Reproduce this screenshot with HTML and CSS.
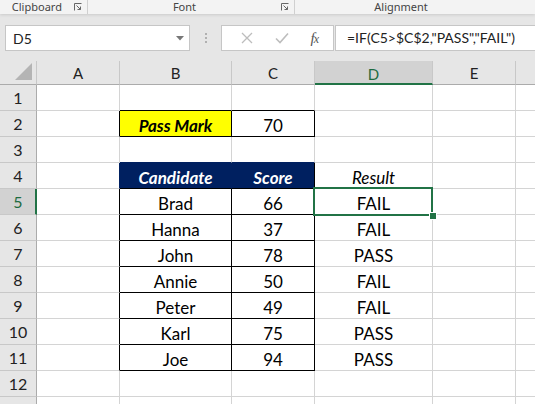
FILE: index.html
```html
<!DOCTYPE html>
<html>
<head>
<meta charset="utf-8">
<link rel="stylesheet" href="styles.css">
</head>
<body>
<div class="ribbon">
  <div class="group g-clip"><span class="glabel">Clipboard</span><svg class="launch" width="8" height="8" viewBox="0 0 8 8"><path d="M0.5 7.5V0.5h7" fill="none" stroke="#666" stroke-width="1"/><path d="M2.5 2.5L6.5 6.5M3.5 6.5h3v-3" fill="none" stroke="#666" stroke-width="1"/></svg></div>
  <div class="group g-font"><span class="glabel">Font</span><svg class="launch" width="8" height="8" viewBox="0 0 8 8"><path d="M0.5 7.5V0.5h7" fill="none" stroke="#666" stroke-width="1"/><path d="M2.5 2.5L6.5 6.5M3.5 6.5h3v-3" fill="none" stroke="#666" stroke-width="1"/></svg></div>
  <div class="group g-align"><span class="glabel">Alignment</span></div>
</div>
<div class="fbar">
  <div class="namebox"><span>D5</span><svg width="8" height="5" viewBox="0 0 8 5"><path d="M0 0h8L4 4.5z" fill="#777"/></svg></div>
  <div class="dots"><i></i><i></i><i></i></div>
  <div class="btns">
    <svg width="12" height="12" viewBox="0 0 12 12"><path d="M1 1L11 11M11 1L1 11" stroke="#bdbdbd" stroke-width="1.3"/></svg>
    <svg width="14" height="12" viewBox="0 0 14 12"><path d="M1 6.5L5 10.5L13 1.5" fill="none" stroke="#bdbdbd" stroke-width="1.6"/></svg>
    <span class="fx"><i>f</i><i class="x">x</i></span>
  </div>
  <div class="formula">=IF(C5&gt;$C$2,"PASS","FAIL")</div>
</div>
<div class="sheet">
  <div class="ch corner"><svg width="18" height="18" viewBox="0 0 18 18"><path d="M17 0V17H0z" fill="#b4b4b4"/></svg></div>
  <div class="ch">A</div><div class="ch">B</div><div class="ch">C</div><div class="ch sel">D</div><div class="ch">E</div><div class="ch last"></div>

  <div class="rh">1</div><div class="c"></div><div class="c bb"></div><div class="c bb"></div><div class="c"></div><div class="c"></div><div class="c last"></div>

  <div class="rh">2</div><div class="c br"></div><div class="c yellow bi br bb">Pass Mark</div><div class="c br bb">70</div><div class="c"></div><div class="c"></div><div class="c last"></div>

  <div class="rh">3</div><div class="c"></div><div class="c bnavy"></div><div class="c bnavy"></div><div class="c"></div><div class="c"></div><div class="c last"></div>

  <div class="rh">4</div><div class="c bnavyr"></div><div class="c navy bi">Candidate</div><div class="c navy bi nr">Score</div><div class="c it">Result</div><div class="c"></div><div class="c last"></div>

  <div class="rh rsel">5</div><div class="c br"></div><div class="c br bb">Brad</div><div class="c br bb">66</div><div class="c active">FAIL<span class="selbox"></span><span class="handle"></span></div><div class="c"></div><div class="c last"></div>

  <div class="rh">6</div><div class="c br"></div><div class="c br bb">Hanna</div><div class="c br bb">37</div><div class="c">FAIL</div><div class="c"></div><div class="c last"></div>

  <div class="rh">7</div><div class="c br"></div><div class="c br bb">John</div><div class="c br bb">78</div><div class="c">PASS</div><div class="c"></div><div class="c last"></div>

  <div class="rh">8</div><div class="c br"></div><div class="c br bb">Annie</div><div class="c br bb">50</div><div class="c">FAIL</div><div class="c"></div><div class="c last"></div>

  <div class="rh">9</div><div class="c br"></div><div class="c br bb">Peter</div><div class="c br bb">49</div><div class="c">FAIL</div><div class="c"></div><div class="c last"></div>

  <div class="rh">10</div><div class="c br"></div><div class="c br bb">Karl</div><div class="c br bb">75</div><div class="c">PASS</div><div class="c"></div><div class="c last"></div>

  <div class="rh">11</div><div class="c br"></div><div class="c br bb">Joe</div><div class="c br bb">94</div><div class="c">PASS</div><div class="c"></div><div class="c last"></div>

  <div class="rh">12</div><div class="c"></div><div class="c"></div><div class="c"></div><div class="c"></div><div class="c"></div><div class="c last"></div>

  <div class="rh"></div><div class="c"></div><div class="c"></div><div class="c"></div><div class="c"></div><div class="c"></div><div class="c last"></div>
</div>
</body>
</html>
```
FILE: styles.css
```css
* { box-sizing: border-box; }
html, body { margin: 0; padding: 0; }
body {
  width: 535px;
  height: 404px;
  overflow: hidden;
  background: #e6e6e6;
  font-family: Lato, "Liberation Sans", sans-serif;
}
.ribbon {
  height: 14px;
  background: #f3f3f3;
  display: flex;
  box-shadow: 0 1px 3px rgba(0,0,0,0.12);
  position: relative;
  font-family: "Noto Sans", "Open Sans", sans-serif;
  font-size: 11px;
  color: #444;
}
.group {
  display: flex;
  align-items: center;
  height: 14px;
  border-right: 1px solid #d0d0d0;
}
.glabel { flex: 1; text-align: center; line-height: 14px; }
.launch { margin-right: 5px; margin-top: -1px; }
.g-clip { width: 96px; }
.g-font { width: 227px; }
.g-align { width: 260px; border-right: none; padding-right: 28px; }

.fbar {
  height: 47px;
  display: flex;
  align-items: flex-start;
  padding-top: 11px;
  padding-left: 5px;
}
.namebox {
  width: 185px;
  height: 26px;
  background: #fff;
  border: 1px solid #c6c6c6;
  display: flex;
  align-items: center;
  justify-content: space-between;
  padding: 0 5px 0 7px;
  font-size: 14px;
  color: #222;
}
.dots {
  width: 31px;
  height: 26px;
  display: flex;
  flex-direction: column;
  align-items: center;
  justify-content: center;
  gap: 2px;
}
.dots i { width: 2px; height: 2px; background: #b0b0b0; display: block; }
.btns {
  width: 113px;
  height: 26px;
  background: #fff;
  border: 1px solid #c6c6c6;
  display: flex;
  align-items: center;
  justify-content: space-around;
  padding: 0 4px 0 8px;
}
.fx {
  font-family: "Liberation Serif", serif;
  font-style: italic;
  color: #555;
  font-size: 15px;
  letter-spacing: -1px;
}
.fx .x { font-size: 12px; }
.formula {
  margin-left: 1px;
  flex: 1;
  height: 26px;
  background: #fff;
  border: 1px solid #c6c6c6;
  border-right: none;
  padding-left: 11px;
  font-size: 14px;
  line-height: 24px;
  color: #222;
  white-space: nowrap;
}

.sheet {
  display: grid;
  grid-template-columns: 37px 83px 112px 83px 118px 83px 1fr;
  grid-template-rows: 24px repeat(13, 26px);
  background: #fff;
  height: 343px;
  overflow: hidden;
}
.ch {
  background: #e6e6e6;
  border-right: 1px solid #c8c8c8;
  border-bottom: 1px solid #ababab;
  font-size: 15px;
  color: #222;
  display: flex;
  align-items: center;
  justify-content: center;
  padding-top: 1px;
}
.ch.corner { justify-content: flex-end; align-items: flex-end; padding: 0 3px 3px 0; }
.ch.sel {
  background: #d2d2d2;
  color: #1e6b40;
  border-bottom: 2px solid #217346;
  padding-top: 3px;
}
.ch.last { border-right: none; }
.rh {
  background: #e6e6e6;
  border-right: 1px solid #ababab;
  border-bottom: 1px solid #c8c8c8;
  font-size: 16px;
  color: #222;
  display: flex;
  align-items: center;
  justify-content: center;
}
.rh.rsel {
  background: #d2d2d2;
  color: #1e6b40;
  border-right: 2px solid #217346;
  padding-left: 1px;
}
.c {
  border-right: 1px solid #d4d4d4;
  border-bottom: 1px solid #d4d4d4;
  font-size: 17px;
  color: #000;
  display: flex;
  align-items: flex-end;
  justify-content: center;
  padding-bottom: 0;
  line-height: 20px;
  white-space: nowrap;
}
.c.last { border-right: none; }
.br { border-right-color: #000; }
.bb { border-bottom-color: #000; }
.bnavy { border-bottom-color: #002060; }
.bnavyr { border-right-color: #002060; }
.yellow { background: #ffff00; }
.bi { font-weight: bold; font-style: italic; }
.it { font-style: italic; }
.navy {
  background: #002060;
  color: #fff;
  border-right-color: #002060;
  border-bottom-color: #000;
}
.navy.nr { border-right-color: #000; }
.active { position: relative; }
.selbox {
  position: absolute;
  left: -2px;
  top: -2px;
  right: -1px;
  bottom: -2px;
  border: 2px solid #217346;
  pointer-events: none;
}
.handle {
  position: absolute;
  right: -4px;
  bottom: -5px;
  width: 6px;
  height: 6px;
  background: #217346;
  outline: 1px solid #fff;
}
```
